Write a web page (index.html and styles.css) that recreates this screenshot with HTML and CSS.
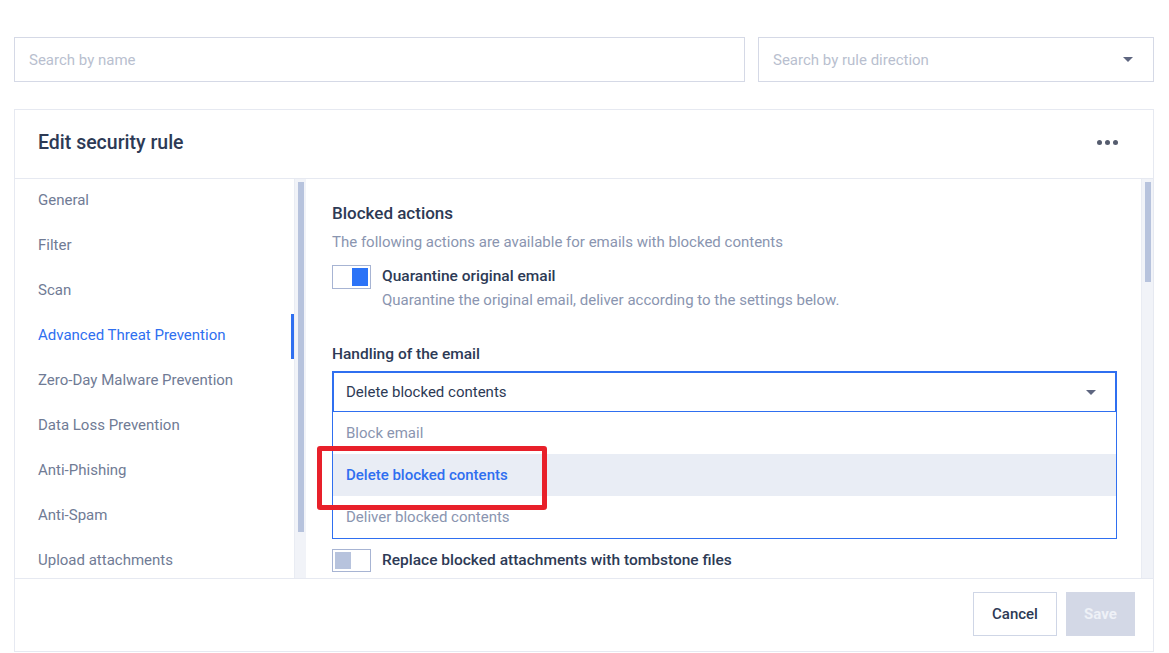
FILE: index.html
```html
<!DOCTYPE html>
<html lang="en">
<head>
  <meta charset="UTF-8">
  <link rel="stylesheet" href="styles.css">
</head>
<body>
  <div class="filters">
    <div class="search">Search by name</div>
    <div class="search direction">
      <span>Search by rule direction</span>
      <span class="caret"></span>
    </div>
  </div>

  <div class="card">
    <div class="card-head">
      <h2>Edit security rule</h2>
      <div class="more"><i></i><i></i><i></i></div>
    </div>

    <div class="card-body">
      <div class="nav">
        <ul class="nav-list">
          <li>General</li>
          <li>Filter</li>
          <li>Scan</li>
          <li class="active">Advanced Threat Prevention</li>
          <li>Zero-Day Malware Prevention</li>
          <li>Data Loss Prevention</li>
          <li>Anti-Phishing</li>
          <li>Anti-Spam</li>
          <li>Upload attachments</li>
        </ul>
        <div class="scroll nav-scroll"><div class="thumb"></div></div>
      </div>

      <div class="content">
        <div class="pane">
          <h3>Blocked actions</h3>
          <p class="desc">The following actions are available for emails with blocked contents</p>

          <div class="option">
            <div class="toggle on"><span></span></div>
            <div>
              <div class="opt-title">Quarantine original email</div>
              <div class="opt-sub">Quarantine the original email, deliver according to the settings below.</div>
            </div>
          </div>

          <div class="field-label">Handling of the email</div>
          <div class="dropdown">
            <div class="select">
              <span>Delete blocked contents</span>
              <span class="caret"></span>
            </div>
            <ul class="menu">
              <li>Block email</li>
              <li class="picked">Delete blocked contents</li>
              <li>Deliver blocked contents</li>
            </ul>
            <div class="mark"></div>
          </div>

          <div class="option">
            <div class="toggle"><span></span></div>
            <div class="opt-title">Replace blocked attachments with tombstone files</div>
          </div>
        </div>
        <div class="scroll main-scroll"><div class="thumb"></div></div>
      </div>
    </div>

    <div class="card-foot">
      <button class="btn cancel">Cancel</button>
      <button class="btn save">Save</button>
    </div>
  </div>
</body>
</html>
```

FILE: styles.css
```css
*{
	box-sizing:border-box;
}
body{
	margin:0;
	padding:37px 15px 0 14px;
	font-family:Roboto, "Liberation Sans", sans-serif;
	color:#2d3a55;
	background:#fff;
}
ul{
	margin:0;
	padding:0;
	list-style:none;
}
.filters{
	display:flex;
	gap:13px;
}
.search{
	flex:1;
	height:45px;
	border:1px solid #d5d9e6;
	padding:0 14px;
	display:flex;
	align-items:center;
	font-size:15px;
	color:#b9bfcf;
}
.search.direction{
	flex:0 0 396px;
	justify-content:space-between;
	padding-right:20px;
}
.caret{
	width:0;
	height:0;
	border-left:5px solid transparent;
	border-right:5px solid transparent;
	border-top:5px solid #5e6680;
}

.card{
	margin-top:27px;
	border:1px solid #e6e9f1;
	height:543px;
	display:flex;
	flex-direction:column;
}
.card-head{
	height:69px;
	flex:none;
	border-bottom:1px solid #e6e9f1;
	display:flex;
	align-items:center;
	justify-content:space-between;
	padding:0 35px 3px 23px;
}
.card-head h2{
	margin:0;
	font-size:19.5px;
	font-weight:500;
	color:#2d3a55;
}
.more{
	display:flex;
	gap:3px;
}
.more i{
	width:5px;
	height:5px;
	border-radius:50%;
	background:#555c6e;
}

.card-body{
	height:400px;
	flex:none;
	display:flex;
	border-bottom:1px solid #e6e9f1;
	overflow:hidden;
}
.nav{
	width:291px;
	display:flex;
}
.nav-list{
	flex:1;
}
.nav-list li{
	height:45px;
	line-height:20px;
	padding:11px 23px 14px;
	font-size:15px;
	color:#707b95;
}
.nav-list li.active{
	color:#2f6ff0;
	border-right:3px solid #2f6ff0;
}
.scroll{
	width:12px;
	background:#f1f3f8;
	border-left:1px solid #e9ecf3;
	padding:3px 2px 0 3px;
}
.nav-scroll .thumb{
	height:350px;
	background:#b7c3dd;
}
.main-scroll .thumb{
	height:100px;
	background:#b7c3dd;
}

.content{
	flex:1;
	display:flex;
}
.pane{
	flex:1;
	padding:24px 24px 0 26px;
}
.pane h3{
	margin:0;
	font-size:17px;
	line-height:20px;
	font-weight:500;
}
.desc{
	margin:9px 0 0;
	font-size:15px;
	line-height:20px;
	color:#8a95b0;
}
.option{
	display:flex;
	gap:11px;
	margin-top:13px;
}
.toggle{
	width:39px;
	height:24px;
	border:1px solid #a7b4d3;
	padding:2px;
	display:flex;
}
.toggle span{
	width:16px;
	height:18px;
	background:#b7c3dd;
}
.toggle.on{
	justify-content:flex-end;
}
.toggle.on span{
	background:#2b73f7;
}
.opt-title{
	font-size:15.5px;
	font-weight:500;
	line-height:22px;
}
.opt-sub{
	font-size:15px;
	line-height:26px;
	color:#8a95b0;
}
.field-label{
	margin-top:31px;
	font-size:15.5px;
	font-weight:500;
	line-height:20px;
}
.dropdown{
	position:relative;
	margin-top:7px;
}
.select{
	height:41px;
	border:2px solid #2f6ff0;
	border-bottom:1px solid #2f6ff0;
	padding:0 19px 0 12px;
	display:flex;
	align-items:center;
	justify-content:space-between;
	font-size:15px;
}
.menu{
	border:1px solid #2f6ff0;
	border-top:none;
}
.menu li{
	height:42px;
	line-height:42px;
	padding-left:13px;
	font-size:15px;
	color:#8a95b0;
}
.menu li.picked{
	background:#e9edf5;
	color:#2f6ff0;
	font-weight:500;
}
.mark{
	position:absolute;
	left:-15px;
	top:75px;
	width:230px;
	height:64px;
	border:5px solid #e8202a;
	border-radius:3px;
}
.dropdown + .option{
	margin-top:10px;
}
.dropdown + .option .toggle{
	height:23px;
	justify-content:flex-start;
}
.dropdown + .option .toggle span{
	height:17px;
}

.card-foot{
	flex:1;
	display:flex;
	justify-content:flex-end;
	align-items:flex-start;
	gap:9px;
	padding:13px 18px 0 0;
}
.btn{
	height:44px;
	font-family:inherit;
	font-size:15px;
	font-weight:500;
	cursor:pointer;
}
.cancel{
	width:84px;
	background:#fff;
	border:1px solid #cfd6e6;
	color:#2d3a55;
}
.save{
	width:69px;
	background:#d3d8e6;
	border:none;
	color:#eef1f7;
	font-weight:700;
}
```
